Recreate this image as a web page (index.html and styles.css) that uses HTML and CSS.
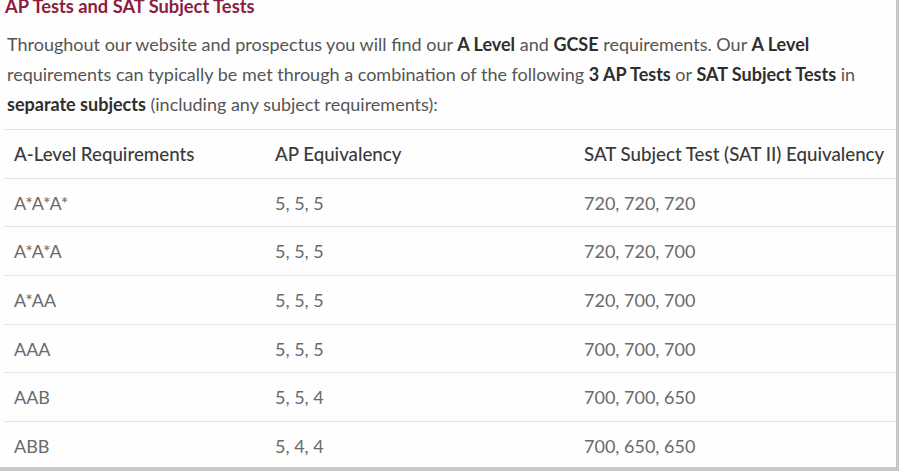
FILE: index.html
```html
<!DOCTYPE html>
<html>
<head>
<meta charset="utf-8">
<link rel="stylesheet" href="styles.css">
</head>
<body>
<div class="frame">
  <h2 class="title">AP Tests and SAT Subject Tests</h2>
  <p class="intro">Throughout our website and prospectus you will find our <b>A Level</b> and <b>GCSE</b> requirements. Our <b>A Level</b> requirements can typically be met through a combination of the following <b>3 AP Tests</b> or <b>SAT Subject Tests</b> in <b>separate subjects</b> (including any subject requirements):</p>
  <table class="req">
    <thead>
      <tr><th class="c1">A-Level Requirements</th><th class="c2">AP Equivalency</th><th>SAT Subject Test (SAT II) Equivalency</th></tr>
    </thead>
    <tbody>
      <tr><td>A*A*A*</td><td>5, 5, 5</td><td>720, 720, 720</td></tr>
      <tr><td>A*A*A</td><td>5, 5, 5</td><td>720, 720, 700</td></tr>
      <tr><td>A*AA</td><td>5, 5, 5</td><td>720, 700, 700</td></tr>
      <tr><td>AAA</td><td>5, 5, 5</td><td>700, 700, 700</td></tr>
      <tr><td>AAB</td><td>5, 5, 4</td><td>700, 700, 650</td></tr>
      <tr><td>ABB</td><td>5, 4, 4</td><td>700, 650, 650</td></tr>
    </tbody>
  </table>
</div>
</body>
</html>
```
FILE: styles.css
```css
html, body {
  margin: 0;
  padding: 0;
  background: #ffffff;
  overflow: hidden;
}
.frame {
  width: 896px;
  height: 467px;
  border-right: 3px solid #c8c8c8;
  border-bottom: 4px solid #c8c8c8;
  overflow: hidden;
  font-family: Lato, "Open Sans", sans-serif;
  background: #fefefe;
}
.title {
  margin: -6px 0 0 5px;
  font-size: 18.3px;
  line-height: 24px;
  font-weight: 700;
  color: #8c1c40;
}
.intro {
  margin: 11px 0 0 7px;
  width: 865px;
  font-size: 18px;
  line-height: 30px;
  color: #555555;
}
.intro b {
  color: #2e2e2e;
  font-weight: 700;
}
.req {
  margin: 10px 0 0 4px;
  width: 892px;
  border-collapse: collapse;
  border-top: 1px solid #e4e4e4;
  font-size: 18px;
}
.req th, .req td {
  text-align: left;
  padding: 0 0 0 10px;
  height: 47.7px;
  border-bottom: 1px solid #e4e4e4;
  vertical-align: middle;
}
.req th {
  font-size: 18.7px;
  font-weight: 500;
  color: #3a3a3a;
}
.req td {
  color: #6a6a6a;
}
.req .c1 { width: 251px; }
.req .c2 { width: 299px; }
```
